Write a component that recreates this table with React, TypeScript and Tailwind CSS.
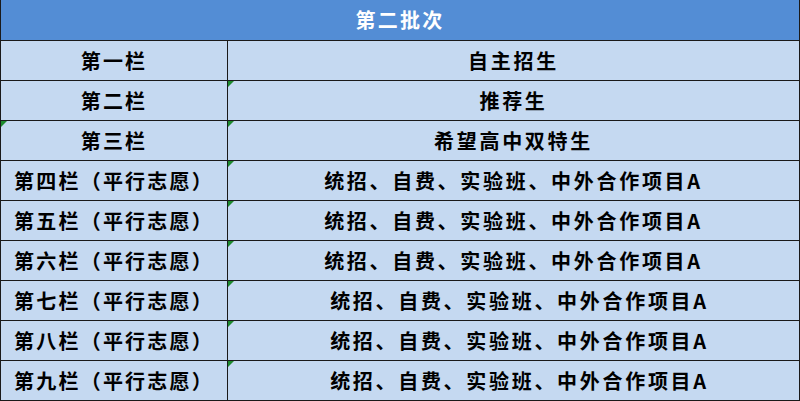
import React from "react";

const rows: { label: string; value: string; shift?: boolean; markLeft?: boolean; markRight?: boolean }[] = [
  { label: "第一栏", value: "自主招生" },
  { label: "第二栏", value: "推荐生", markRight: true },
  { label: "第三栏", value: "希望高中双特生", markLeft: true, markRight: true },
  { label: "第四栏（平行志愿）", value: "统招、自费、实验班、中外合作项目A", markRight: true },
  { label: "第五栏（平行志愿）", value: "统招、自费、实验班、中外合作项目A", markRight: true },
  { label: "第六栏（平行志愿）", value: "统招、自费、实验班、中外合作项目A", markRight: true },
  { label: "第七栏（平行志愿）", value: "统招、自费、实验班、中外合作项目A", shift: true, markRight: true },
  { label: "第八栏（平行志愿）", value: "统招、自费、实验班、中外合作项目A", shift: true, markRight: true },
  { label: "第九栏（平行志愿）", value: "统招、自费、实验班、中外合作项目A", shift: true, markRight: true },
];

// 绿色小三角 (Excel 单元格提示)
const Mark = () => (
  <svg className="absolute left-0 top-0" width="6" height="6" viewBox="0 0 6 6">
    <polygon points="0,0 6,0 0,6" fill="#1e8a2e" />
  </svg>
);

export default function App() {
  return (
    <div
      className="w-[800px] bg-white border-l border-r border-[#1a1a1a] font-bold text-black"
      style={{ fontFamily: '"Noto Sans CJK SC", "Noto Sans", sans-serif' }}
    >
      <div className="h-[40px] bg-[#538dd5] flex items-center justify-center text-white text-[20px] tracking-[2.3px]">
        第二批次
      </div>
      {rows.map((r, i) => (
        <div
          key={i}
          className={`grid grid-cols-[227px_1fr] h-[40px] border-t border-[#1a1a1a] bg-[#c5d9f1] ${
            i === rows.length - 1 ? "h-[41px] border-b" : ""
          }`}
        >
          <div className="relative flex items-center justify-center border-r border-[#1a1a1a] text-[20px] tracking-[2.2px] leading-none">
            {r.markLeft && <Mark />}
            {r.label}
          </div>
          <div
            className={`relative flex items-center justify-center text-[20px] tracking-[2.7px] leading-none ${
              r.shift ? "pl-[12px]" : ""
            }`}
          >
            {r.markRight && <Mark />}
            {r.value}
          </div>
        </div>
      ))}
    </div>
  );
}
